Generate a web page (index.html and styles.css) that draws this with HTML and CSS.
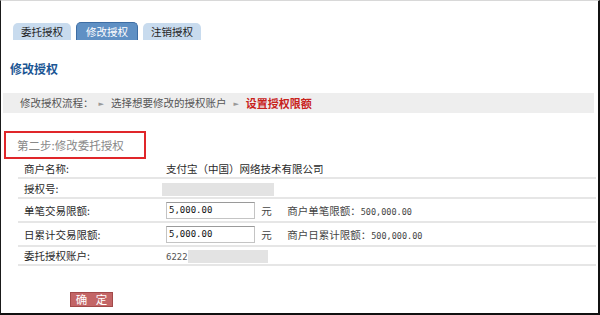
FILE: index.html
```html
<!DOCTYPE html>
<html>
  <head>
    <meta charset="utf-8">
    <link rel="stylesheet" href="styles.css">
  </head>
  <body>
    <div class="frame">
      <ul class="tabs">
        <li class="tab">委托授权</li>
        <li class="tab active">修改授权</li>
        <li class="tab">注销授权</li>
      </ul>

      <h2 class="page-title">修改授权</h2>

      <div class="steps">
        <span class="steps-label">修改授权流程：</span>
        <span class="arrow">&#9658;</span>
        <span>选择想要修改的授权账户</span>
        <span class="arrow">&#9658;</span>
        <span class="current">设置授权限额</span>
      </div>

      <div class="step-title">第二步:修改委托授权</div>

      <table class="form-table">
        <tr class="row-name">
          <th>商户名称:</th>
          <td>支付宝（中国）网络技术有限公司</td>
        </tr>
        <tr class="row-id">
          <th>授权号:</th>
          <td><span class="masked masked-id"></span></td>
        </tr>
        <tr class="row-input">
          <th>单笔交易限额:</th>
          <td>
            <input class="amount" type="text" value="5,000.00">
            <span class="unit">元</span>
            <span class="limit">商户单笔限额：<span class="num">500,000.00</span></span>
          </td>
        </tr>
        <tr class="row-input">
          <th>日累计交易限额:</th>
          <td>
            <input class="amount" type="text" value="5,000.00">
            <span class="unit">元</span>
            <span class="limit">商户日累计限额：<span class="num">500,000.00</span></span>
          </td>
        </tr>
        <tr class="row-account">
          <th>委托授权账户:</th>
          <td><span class="acct">6222</span><span class="masked masked-acct"></span></td>
        </tr>
      </table>

      <div class="actions">
        <button class="btn-submit" type="button">确 定</button>
      </div>
    </div>
  </body>
</html>
```

FILE: styles.css
```css
body {
  margin: 0;
  font-family: "Noto Sans CJK SC", "DejaVu Sans", sans-serif;
  font-size: 10.5px;
  color: #2a2a2a;
  background: #ffffff;
}

.frame {
  width: 600px;
  height: 315px;
  box-sizing: border-box;
  border-left: 1px solid #1a1a1a;
  border-top: 1px solid #d8d8d8;
  border-right: 2px solid #111;
  border-bottom: 2px solid #111;
  overflow: hidden;
}

.tabs {
  list-style: none;
  margin: 0;
  padding: 21px 0 0 12px;
  display: flex;
  gap: 5px;
  align-items: flex-end;
}

.tab {
  height: 17px;
  line-height: 17px;
  padding: 0 8px;
  background: #c8dbee;
  color: #1e1e1e;
  border-radius: 5px 5px 0 0;
  font-size: 10.5px;
}

.tab.active {
  height: 17px;
  padding: 0 9px;
  background: #5f90c4;
  color: #ffffff;
  border: 1px solid #3d6da3;
  border-bottom: none;
}

.page-title {
  margin: 22px 0 0 9px;
  font-size: 12px;
  font-weight: bold;
  color: #1b5694;
  line-height: 14px;
}

.steps {
  margin: 17px 4px 0 2px;
  height: 20px;
  line-height: 20px;
  background: #eeeeee;
  padding-left: 17px;
  color: #555;
  display: flex;
  align-items: center;
}

.steps .arrow {
  font-size: 7px;
  color: #999;
  margin: 0 7px 0 0;
}

.steps-label {
  margin-right: -2px;
}

.steps span + .arrow {
  margin-left: 7px;
}

.steps .current {
  color: #c8221c;
  font-weight: bold;
  font-size: 11px;
}

.step-title {
  margin: 18px 0 0 3px;
  height: 24px;
  line-height: 24px;
  border: 2px solid #e0262a;
  padding-left: 11px;
  color: #888;
  font-size: 11.5px;
  width: 127px;
}

.form-table {
  margin-left: 17px;
  width: 578px;
  border-collapse: collapse;
}

.form-table th {
  width: 142px;
  text-align: left;
  font-weight: normal;
  padding: 0 0 0 6px;
  color: #2a2a2a;
}

.form-table td {
  padding: 0;
  color: #2a2a2a;
}

.form-table tr {
  border-bottom: 2px solid #e6e6e6;
}

.row-name {
  height: 19px;
}

.row-id {
  height: 20px;
}

.row-input {
  height: 24px;
}

.row-account {
  height: 19px;
}

.masked {
  display: inline-block;
  background: #e3e3e3;
  vertical-align: middle;
}

.masked-id {
  width: 112px;
  height: 13px;
  margin-left: -4px;
}

.masked-acct {
  width: 80px;
  height: 13px;
}

.acct {
  font-family: "DejaVu Sans", sans-serif;
  font-size: 8.5px;
  color: #555;
  vertical-align: middle;
}

.amount {
  width: 89px;
  height: 17px;
  box-sizing: border-box;
  border: 1px solid #c4c4c4;
  border-top-color: #9a9a9a;
  padding: 0 2px;
  font-family: "DejaVu Sans Mono", monospace;
  font-size: 9px;
  color: #111;
  vertical-align: middle;
  margin: 0;
}

.unit {
  margin-left: 4px;
  vertical-align: middle;
  color: #444;
}

.limit {
  margin-left: 13px;
  vertical-align: middle;
  color: #444;
}

.num {
  font-family: "DejaVu Sans Mono", monospace;
  font-size: 8.5px;
}

.actions {
  padding: 26px 0 0 69px;
}

.btn-submit {
  width: 43px;
  height: 15px;
  padding: 0;
  background: #c36566;
  border: 1px solid #a34a4a;
  color: #ffffff;
  font-family: "Noto Sans CJK SC", sans-serif;
  font-size: 11.5px;
  line-height: 13px;
  letter-spacing: 3px;
  text-indent: 3px;
}
```
